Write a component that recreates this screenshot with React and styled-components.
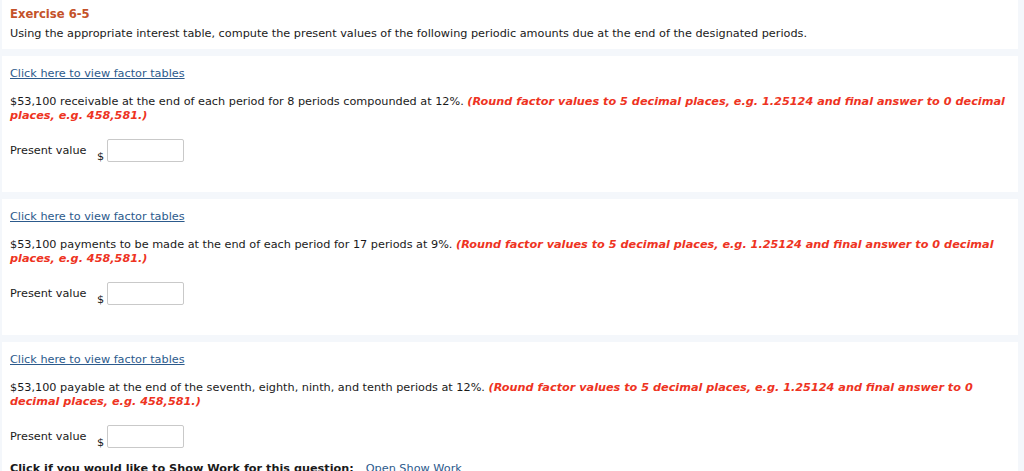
import React from "react";
import styled, { createGlobalStyle } from "styled-components";

const GlobalStyle = createGlobalStyle`
  html, body {
    margin: 0;
    padding: 0;
    background: #f4f7fb;
  }
  body {
    font-family: "DejaVu Sans", Verdana, sans-serif;
    font-size: 11.25px;
    color: #1a1a1a;
  }
`;

const Page = styled.div`
  width: 1016px;
  padding-left: 2px;
  display: flex;
  flex-direction: column;
  gap: 7px;
`;

const Panel = styled.section`
  background: #ffffff;
  padding: ${p => p.$head ? "6px 8px 8px" : "11px 8px 16px"};
`;

const Title = styled.h2`
  margin: 0;
  font-size: 11.6px;
  line-height: 16px;
  font-weight: bold;
  color: #c4522a;
`;

const Intro = styled.p`
  margin: 5px 0 0;
  line-height: 14px;
`;

const TableLink = styled.a`
  display: block;
  line-height: 14px;
  color: #2c5a8c;
  text-decoration: underline;
  cursor: pointer;
`;

const Question = styled.p`
  margin: 14px 0 0;
  line-height: 14px;
`;

const Hint = styled.span`
  color: #ee3322;
  font-weight: bold;
  font-style: italic;
`;

const AnswerRow = styled.div`
  display: flex;
  align-items: center;
  margin: 16px 0 14px;
`;

const Label = styled.span`
  width: 87px;
`;

const Dollar = styled.span`
  align-self: flex-end;
  width: 10px;
  line-height: 14px;
  margin-bottom: -2px;
`;

const AmountInput = styled.input`
  box-sizing: border-box;
  width: 77px;
  height: 23px;
  margin: 0;
  border: 1px solid #c9c9c9;
  border-radius: 2px;
  background: #fff;
`;

const ShowWork = styled.div`
  line-height: 14px;
  font-weight: bold;
  white-space: nowrap;
`;

const WorkLink = styled.a`
  font-weight: normal;
  color: #2c5a8c;
  margin-left: 12px;
`;

const hint =
  "(Round factor values to 5 decimal places, e.g. 1.25124 and final answer to 0 decimal places, e.g. 458,581.)";

const questions = [
  "$53,100 receivable at the end of each period for 8 periods compounded at 12%.",
  "$53,100 payments to be made at the end of each period for 17 periods at 9%.",
  "$53,100 payable at the end of the seventh, eighth, ninth, and tenth periods at 12%.",
];

export default function App() {
  return (
    <Page>
      <GlobalStyle />
      <Panel $head>
        <Title>Exercise 6-5</Title>
        <Intro>
          Using the appropriate interest table, compute the present values of the
          following periodic amounts due at the end of the designated periods.
        </Intro>
      </Panel>
      {questions.map((q, i) => (
        <Panel key={i}>
          <TableLink>Click here to view factor tables</TableLink>
          <Question>
            {q} <Hint>{hint}</Hint>
          </Question>
          <AnswerRow>
            <Label>Present value</Label>
            <Dollar>$</Dollar>
            <AmountInput type="text" />
          </AnswerRow>
          {i === questions.length - 1 && (
            <ShowWork>
              Click if you would like to Show Work for this question:
              <WorkLink>Open Show Work</WorkLink>
            </ShowWork>
          )}
        </Panel>
      ))}
    </Page>
  );
}
